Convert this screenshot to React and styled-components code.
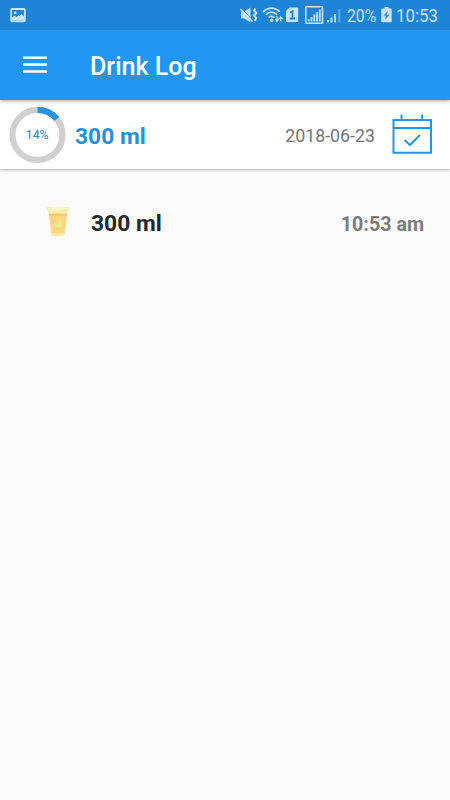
import React from 'react';
import styled, { createGlobalStyle } from 'styled-components';

const GlobalStyle = createGlobalStyle`
  * {
    box-sizing: border-box;
  }

  body {
    margin: 0;
    background: #fafafa;
    font-family: Roboto, sans-serif;
  }

  svg {
    display: block;
    flex-shrink: 0;
  }
`;

const Screen = styled.div`
  width: 100%;
  min-height: 100vh;
  background: #fafafa;
  display: flex;
  flex-direction: column;
`;

// Status bar
const StatusBar = styled.div`
  height: 30px;
  padding: 0 12px 0 10px;
  background: #1e84d7;
  color: #c5e6fb;
  display: flex;
  align-items: center;
  justify-content: space-between;
  position: relative;
  z-index: 2;
`;

const StatusIcons = styled.div`
  display: flex;
  align-items: center;
`;

const StatusText = styled.span`
  width: ${({ $width }) => $width}px;
  margin: 1px 0 0 ${({ $gap }) => $gap}px;
  font-size: 19px;
  line-height: 30px;
  white-space: nowrap;
  transform: scaleX(${({ $scale }) => $scale});
  transform-origin: left center;
`;

const Battery = styled.svg`
  margin-left: 4px;
`;

// Toolbar
const Toolbar = styled.header`
  height: 70px;
  padding: 0 23px;
  background: #2196f3;
  box-shadow: 0 1px 4px rgba(0, 0, 0, 0.35);
  display: flex;
  align-items: center;
  position: relative;
  z-index: 1;
`;

const MenuButton = styled.button`
  padding: 0;
  border: none;
  background: none;
  margin-right: 43px;
`;

const Title = styled.h1`
  margin: 3px 0 0;
  color: #fff;
  font-size: 25px;
  font-weight: 500;
  line-height: 30px;
`;

// Daily summary
const Summary = styled.section`
  height: 69px;
  padding: 0 18px 0 9px;
  background: #fff;
  box-shadow: 0 1px 2px rgba(0, 0, 0, 0.32);
  display: flex;
  align-items: center;
`;

const Total = styled.span`
  flex: 1;
  margin: 4px 0 0 9px;
  color: #288fe0;
  font-size: 22.8px;
  font-weight: 700;
`;

const DateText = styled.span`
  margin: 1px 17px 0 0;
  color: #757575;
  font-size: 17.8px;
`;

const Calendar = styled.svg`
  margin-bottom: 1px;
`;

const LogList = styled.main`
  padding: 29px 26px 0 45px;
`;

const LogRow = styled.div`
  height: 50px;
  display: flex;
  align-items: center;
`;

const Cup = styled.svg`
  margin-bottom: 4px;
`;

const Amount = styled.span`
  flex: 1;
  margin-left: 20px;
  color: #262626;
  font-size: 22.8px;
  font-weight: 700;
`;

const Time = styled.span`
  margin-top: 3px;
  color: #7c7c7c;
  font-size: 19.7px;
  font-weight: 700;
`;

const PictureIcon = () => (
  <svg width="16" height="15" viewBox="0 0 16 15">
    <rect x="1.2" y="1" width="13.6" height="12.4" rx="0.8" fill="none" stroke="currentColor" strokeWidth="1.8" />
    <circle cx="5.2" cy="4.8" r="1.4" fill="currentColor" />
    <path d="M2 12.5V9.5L4.5 7.8 6.5 9 8.5 7.5 9.5 8 11.5 6 14 8.2V12.5Z" fill="currentColor" />
  </svg>
);

const SystemIcons = () => (
  <svg width="102" height="22" viewBox="240 4 102 22" fill="none" stroke="currentColor">
    {/* Muted speaker */}
    <path d="M241 11.5H244.5L250.5 7.5V22.5L244.5 18.5H241Z" fill="currentColor" stroke="none" />
    <path d="M241.5 8.5L253 20.5" stroke="#1e84d7" strokeWidth="1" />
    <path d="M240.5 9L252.5 21.5" strokeWidth="1.6" />
    <path d="M255.5 8.5L254 10.5 256.3 13 254 15.5 256.3 18 254.8 21" strokeWidth="1.9" />
    {/* Wifi with traffic arrows */}
    <path d="M263 11.7Q271.5 4.5 280 11.7M265.8 14.8Q271.5 9.5 277.2 14.8M268.6 17.7Q271.5 14.8 274.3 17.7" strokeWidth="1.8" />
    <circle cx="271.6" cy="20.2" r="1.7" fill="currentColor" stroke="none" />
    <path d="M277 16V21M275.2 19L277 21.2 278.8 19M280.8 21.5V17M279 19L280.8 17 282.6 19" strokeWidth="1.2" />
    {/* SIM card */}
    <path d="M289.5 7.5H297.2Q298.2 7.5 298.2 8.5V21Q298.2 22 297.2 22H287Q286 22 286 21V11Z" fill="currentColor" stroke="none" />
    <path d="M290 12.5L292.5 11.3V18.5M289.7 18.5H295" stroke="#1e84d7" strokeWidth="1.8" />
    {/* Signal bars */}
    <rect x="305.8" y="6.7" width="16.7" height="16.6" rx="0.5" strokeWidth="1.5" />
    <path d="M308.7 21.5V19.3M311.5 21.5V17M314.3 21.5V14.5M317.1 21.5V12M319.8 21.5V9.5" strokeWidth="1.8" />
    <path d="M328 22.5V20M331.5 22.5V17.5" strokeWidth="2" />
    <path d="M335 22.5V14" strokeWidth="2" opacity="0.85" />
    <path d="M339.3 22.5V9" strokeWidth="2" opacity="0.35" />
  </svg>
);

const BatteryIcon = () => (
  <Battery width="11" height="16" viewBox="0 0 11 16">
    <path d="M3.5 0H7.5V1.5H9.8Q10.7 1.5 10.7 2.4V14.3Q10.7 15.2 9.8 15.2H1.2Q.3 15.2.3 14.3V2.4Q.3 1.5 1.2 1.5H3.5Z" fill="currentColor" />
    <path d="M6.7 3.7L2.5 8.8H5L4.2 13 8.5 7.7H6Z" fill="#3291db" />
  </Battery>
);

const MenuIcon = () => (
  <svg width="24" height="18" viewBox="0 0 24 18">
    <path d="M0 1.7H24M0 8.6H24M0 15.5H24" stroke="#fff" strokeWidth="2.6" />
  </svg>
);

const ProgressRing = ({ percent }) => {
  const length = 2 * Math.PI * 25;

  return (
    <svg width="57" height="57" viewBox="0 0 57 57">
      <circle cx="28.5" cy="28.9" r="25" fill="none" stroke="#d0d0d0" strokeWidth="6.2" />
      <circle
        cx="28.5"
        cy="28.9"
        r="25"
        fill="none"
        stroke="#2794eb"
        strokeWidth="6.2"
        strokeDasharray={`${(length * percent) / 100} ${length}`}
        transform="rotate(-90 28.5 28.9)"
      />
      <text x="28.2" y="33" textAnchor="middle" fontSize="12.3" fill="#2e86c8">
        {percent}%
      </text>
    </svg>
  );
};

const CalendarIcon = () => (
  <Calendar width="40" height="40" viewBox="0 0 40 40" fill="none" stroke="#2794e8">
    <path d="M1.5 6H39V38.8H1.5ZM1.5 14H39" strokeWidth="2" />
    <path d="M9.5 0.5V6M30.2 0.5V6" strokeWidth="2" />
    <path d="M12.5 26L18 31 28 21" strokeWidth="2" />
  </Calendar>
);

const CupIcon = () => (
  <Cup width="26" height="32" viewBox="0 0 26 32">
    <path d="M3 4H23L19.8 29.5Q19.2 31.2 13 31.2T6.2 29.5Z" fill="#faeaa6" />
    <path d="M4 9Q13 10.5 22 9L19.5 27.5Q13 29.5 6.5 27.5Z" fill="#fdd680" />
    <path d="M4 9Q13 7.5 22 9L21.7 10.7Q13 12 4.3 10.7Z" fill="#f9c67c" />
    <rect x="1.5" y="1.8" width="23" height="5" rx="2.4" fill="#eff2b4" />
    <ellipse cx="13" cy="3.3" rx="10" ry="1.2" fill="#f7f7d0" />
    <path d="M15 13.5Q18.5 18.5 14.8 22Q11.5 23.5 9 20.5Q14 20 15 13.5Z" fill="#eaec90" />
    <path d="M9.5 18L12 20.5" stroke="#f2eb9b" strokeWidth="1.5" />
  </Cup>
);

const entries = [{ amount: '300 ml', time: '10:53 am' }];

const App = () => {
  return (
    <Screen>
      <GlobalStyle />

      <StatusBar>
        <PictureIcon />
        <StatusIcons>
          <SystemIcons />
          <StatusText $width={30} $gap={5} $scale={0.83}>20%</StatusText>
          <BatteryIcon />
          <StatusText $width={42} $gap={4} $scale={0.89}>10:53</StatusText>
        </StatusIcons>
      </StatusBar>

      <Toolbar>
        <MenuButton aria-label="Menu">
          <MenuIcon />
        </MenuButton>
        <Title>Drink Log</Title>
      </Toolbar>

      <Summary>
        <ProgressRing percent={14} />
        <Total>300 ml</Total>
        <DateText>2018-06-23</DateText>
        <CalendarIcon />
      </Summary>

      <LogList>
        {entries.map((entry) => (
          <LogRow key={entry.time}>
            <CupIcon />
            <Amount>{entry.amount}</Amount>
            <Time>{entry.time}</Time>
          </LogRow>
        ))}
      </LogList>
    </Screen>
  );
};

export default App;
